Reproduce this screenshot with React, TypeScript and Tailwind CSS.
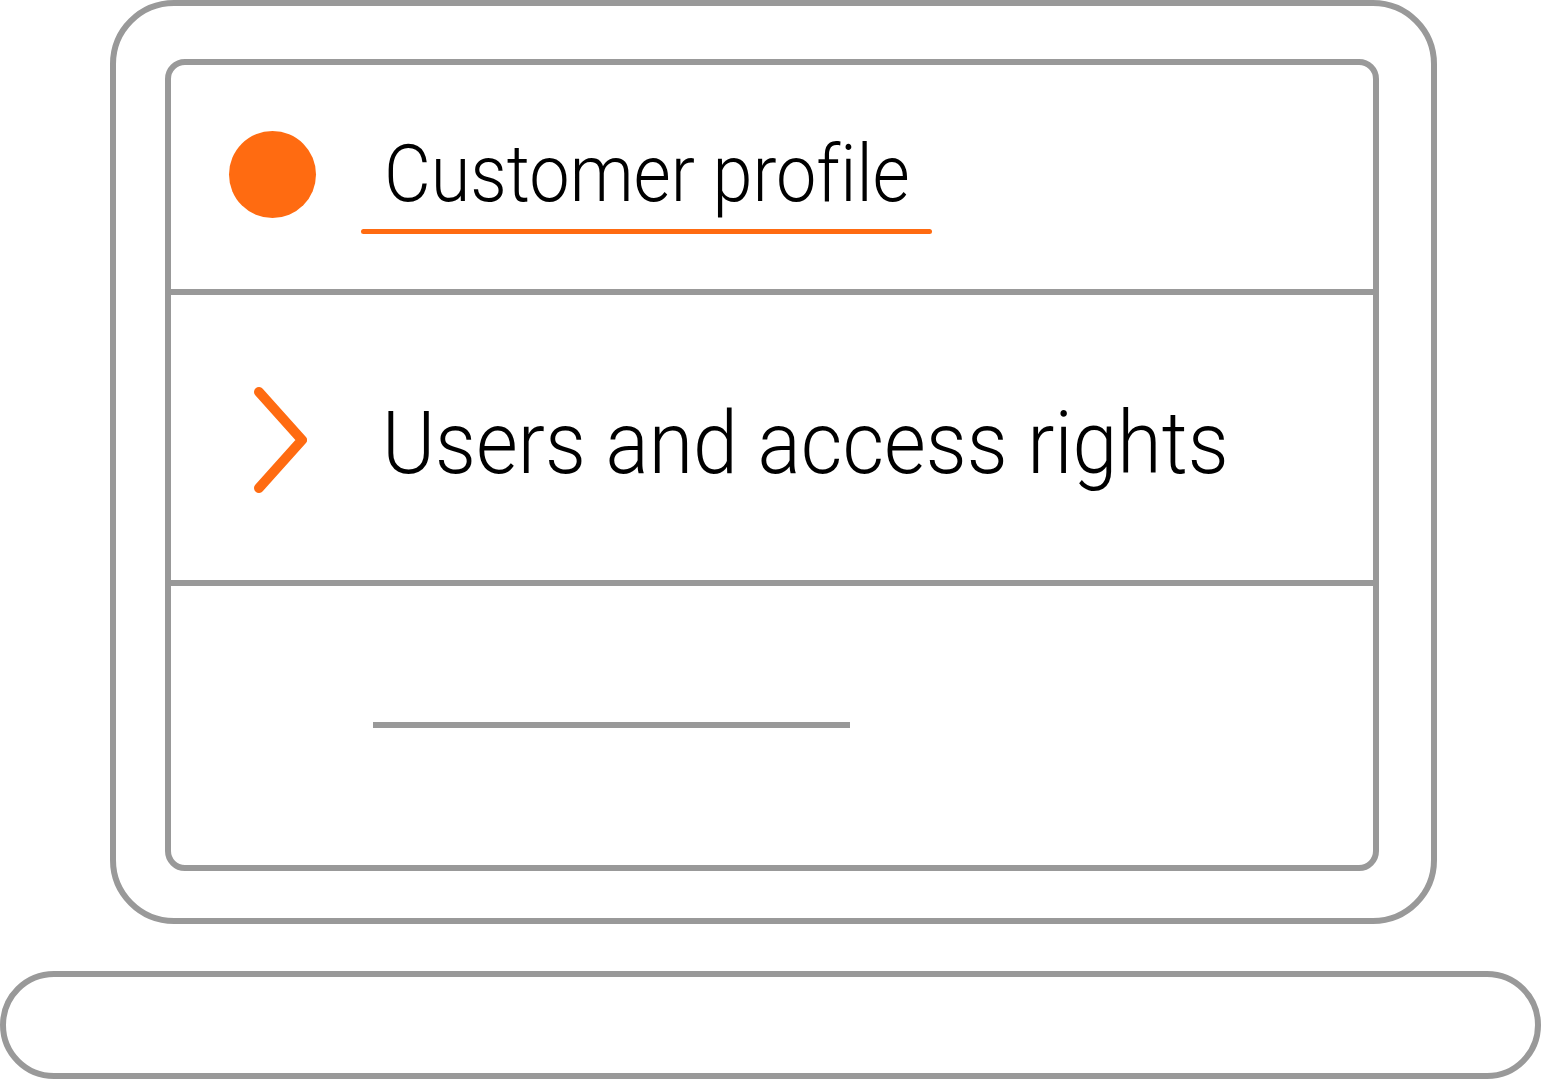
import React from "react";

const Chevron = () => (
  <svg width="54" height="107" viewBox="0 0 54 107" fill="none">
    <path
      d="M6 6 L49 54 L6 102"
      stroke="#FF6B11"
      strokeWidth="10"
      strokeLinecap="round"
      strokeLinejoin="round"
    />
  </svg>
);

export default function App() {
  return (
    <div
      className="w-[1541px] h-[1080px] bg-white overflow-hidden flex flex-col text-black [font-variant-ligatures:none]"
      style={{ fontFamily: 'Roboto, "Liberation Sans", sans-serif' }}
    >
      {/* laptop screen */}
      <div className="ml-[110px] w-[1327px] h-[924px] border-[6px] border-[#999999] rounded-[64px] pt-[53px] pl-[49px] pr-[52px] pb-[47px]">
        <div className="h-full border-[6px] border-[#999999] rounded-[20px] flex flex-col overflow-hidden">
          {/* selected item */}
          <div className="h-[224px] flex items-start pl-[58px]">
            <div className="mt-[66px] w-[87px] h-[87px] rounded-full bg-[#FF6B11] shrink-0" />
            <div className="ml-[45px] mt-[69px] w-[571px] flex flex-col items-start">
              <span className="ml-[23px] text-[80px] leading-[80px] font-light whitespace-nowrap origin-left scale-x-[0.9]">
                Customer profile
              </span>
              <div className="mt-[15px] w-full h-[5px] rounded-full bg-[#FF6B11]" />
            </div>
          </div>

          {/* next item */}
          <div className="h-[291px] border-t-[6px] border-[#999999] flex items-start pl-[82px]">
            <div className="mt-[91px] shrink-0">
              <Chevron />
            </div>
            <span className="ml-[75px] mt-[104px] text-[88px] leading-[88px] font-light whitespace-nowrap origin-left scale-x-[0.917]">
              Users and access rights
            </span>
          </div>

          {/* placeholder item */}
          <div className="flex-1 border-t-[6px] border-[#999999] pl-[202px] pt-[136px]">
            <div className="w-[477px] h-[6px] bg-[#999999]" />
          </div>
        </div>
      </div>

      {/* laptop base */}
      <div className="mt-[47px] w-[1541px] h-[108px] border-[6px] border-[#999999] rounded-full" />
    </div>
  );
}
